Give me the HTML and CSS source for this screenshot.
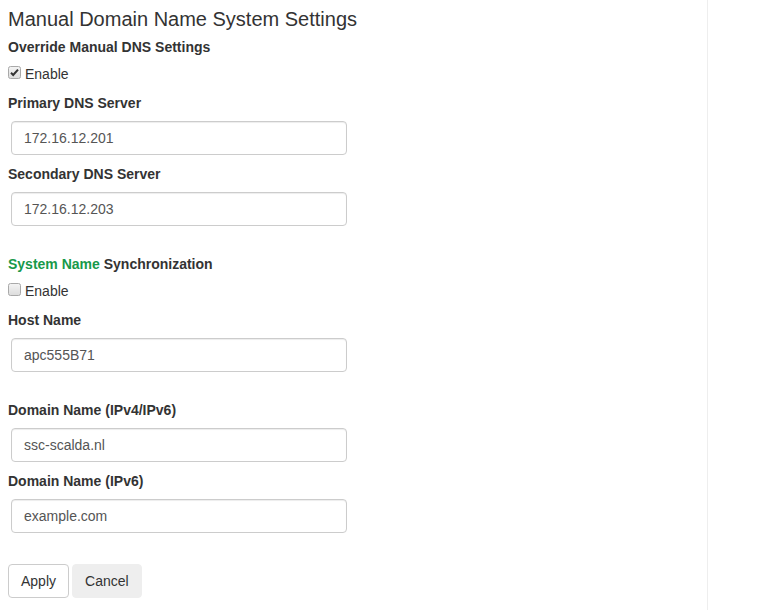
FILE: index.html
```html
<!DOCTYPE html>
<html>
<head>
<meta charset="utf-8">
<link rel="stylesheet" href="styles.css">
</head>
<body>
<div class="layout">
  <main class="main">
    <h1 class="title">Manual Domain Name System Settings</h1>

    <div class="label first">Override Manual DNS Settings</div>
    <div class="check-row">
      <svg class="cb" width="13" height="13" viewBox="0 0 13 13">
        <defs><linearGradient id="g1" x1="0" y1="0" x2="0" y2="1"><stop offset="0" stop-color="#f4f4f4"/><stop offset="1" stop-color="#dcdcdc"/></linearGradient></defs>
        <rect x="0.5" y="0.5" width="12" height="12" rx="2" fill="url(#g1)" stroke="#a9a9a9"/>
        <path d="M3 6.8 L5.2 9 L10 3.6" fill="none" stroke="#333" stroke-width="2"/>
      </svg>
      <span>Enable</span>
    </div>

    <div class="label group">Primary DNS Server</div>
    <input class="field" type="text" value="172.16.12.201">

    <div class="label group">Secondary DNS Server</div>
    <input class="field" type="text" value="172.16.12.203">

    <div class="label section"><span class="green">System Name</span> Synchronization</div>
    <div class="check-row">
      <svg class="cb" width="13" height="13" viewBox="0 0 13 13">
        <defs><linearGradient id="g2" x1="0" y1="0" x2="0" y2="1"><stop offset="0" stop-color="#f4f4f4"/><stop offset="1" stop-color="#dcdcdc"/></linearGradient></defs>
        <rect x="0.5" y="0.5" width="12" height="12" rx="2" fill="url(#g2)" stroke="#a9a9a9"/>
      </svg>
      <span>Enable</span>
    </div>

    <div class="label group">Host Name</div>
    <input class="field" type="text" value="apc555B71">

    <div class="label section">Domain Name (IPv4/IPv6)</div>
    <input class="field" type="text" value="ssc-scalda.nl">

    <div class="label group">Domain Name (IPv6)</div>
    <input class="field" type="text" value="example.com">

    <div class="buttons">
      <button class="btn btn-default" type="button">Apply</button>
      <button class="btn btn-cancel" type="button">Cancel</button>
    </div>
  </main>
  <aside class="side"></aside>
</div>
</body>
</html>
```

FILE: styles.css
```css
html, body {
  margin: 0;
  padding: 0;
  background: #fff;
}
body {
  font-family: "Liberation Sans", Arial, sans-serif;
  font-size: 14px;
  line-height: 20px;
  color: #333;
}
.layout {
  display: flex;
  min-height: 610px;
}
.main {
  width: 699px;
  padding-left: 8px;
  border-right: 1px solid #eeeeee;
  display: flex;
  flex-direction: column;
  align-items: flex-start;
}
.side {
  flex: 1;
}
.title {
  margin: 8px 0 0 0;
  font-size: 20px;
  line-height: 22px;
  font-weight: normal;
  color: #333;
}
.label {
  font-weight: bold;
  line-height: 20px;
}
.label.first { margin-top: 7px; }
.label.group { margin-top: 9px; }
.label.section { margin-top: 28px; }
.check-row + .label.group { margin-top: 9px; }
.green { color: #17994a; }
.check-row {
  display: flex;
  align-items: flex-start;
  gap: 4px;
  margin-top: 7px;
  line-height: 20px;
}
.label.section + .check-row { margin-top: 7px; }
.cb {
  display: block;
  margin-top: 2px;
  flex: none;
}
.field {
  box-sizing: border-box;
  display: block;
  width: 336px;
  height: 34px;
  margin: 8px 0 0 3px;
  padding: 6px 12px;
  font-family: "Liberation Sans", Arial, sans-serif;
  font-size: 14px;
  line-height: 20px;
  color: #555;
  background: #fff;
  border: 1px solid #ccc;
  border-radius: 4px;
  box-shadow: inset 0 1px 1px rgba(0,0,0,0.075);
  outline: none;
}
.buttons {
  display: flex;
  gap: 3px;
  margin-top: 31px;
}
.btn {
  box-sizing: border-box;
  height: 34px;
  padding: 6px 12px;
  font-family: "Liberation Sans", Arial, sans-serif;
  font-size: 14px;
  line-height: 20px;
  color: #333;
  border-radius: 4px;
  cursor: pointer;
}
.btn-default {
  background: #fff;
  border: 1px solid #ccc;
}
.btn-cancel {
  background: #eeeeee;
  border: 1px solid #eeeeee;
}
```
